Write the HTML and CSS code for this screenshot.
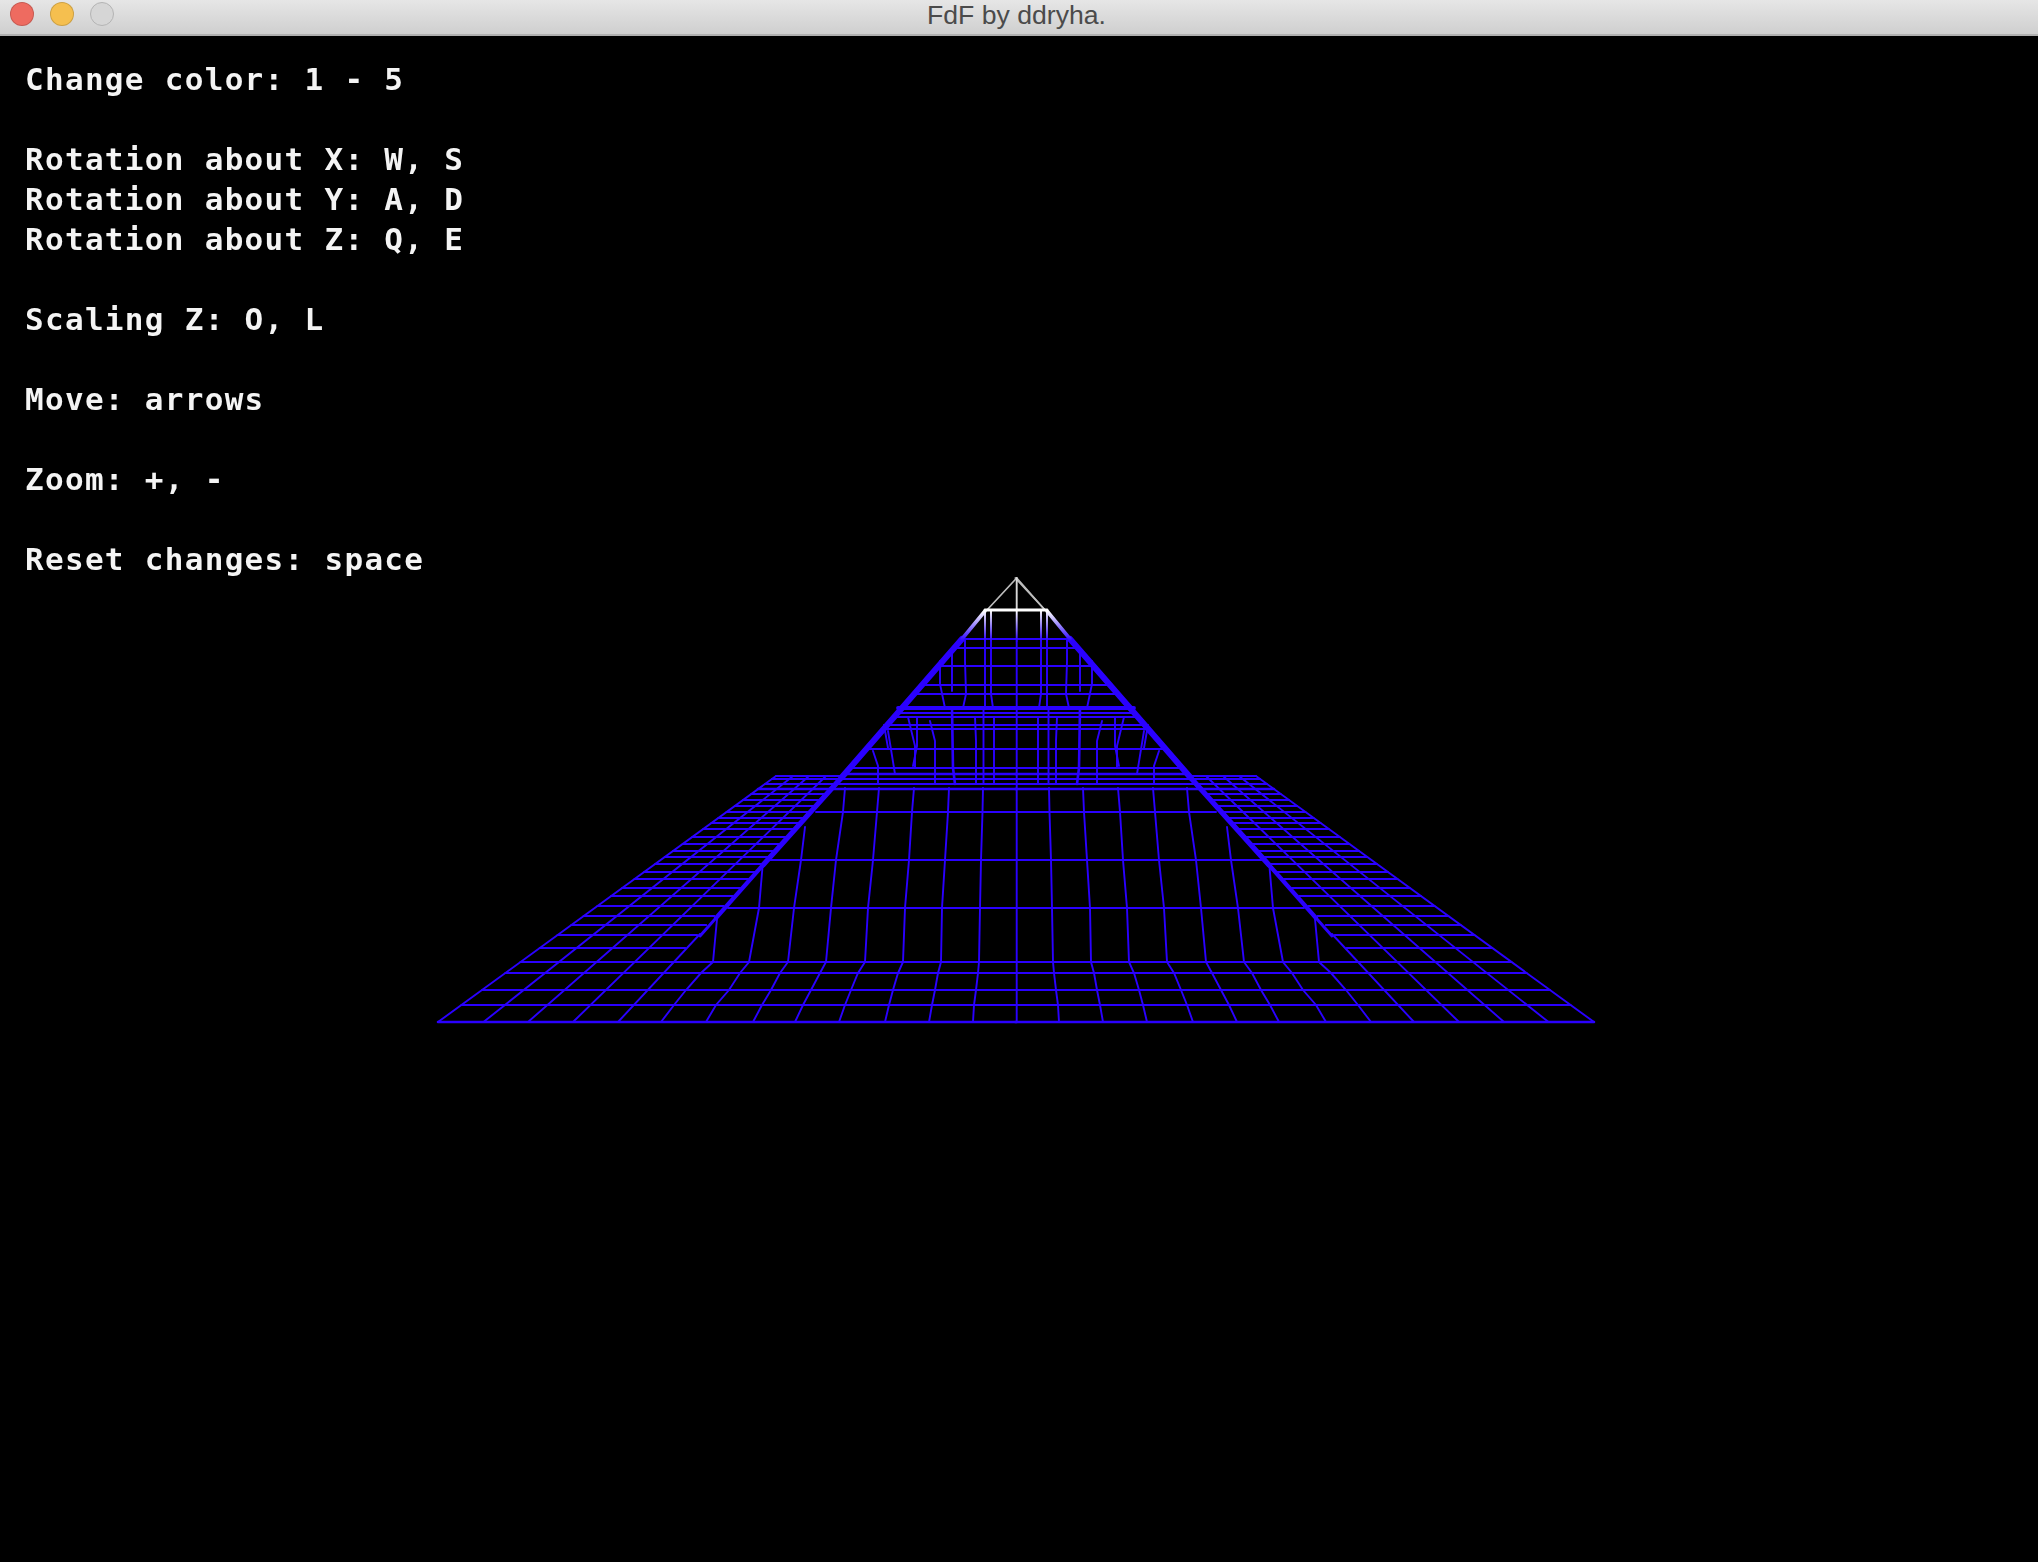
FILE: index.html
```html
<!DOCTYPE html>
<html lang="en">
<head>
<meta charset="utf-8">
<title>FdF by ddryha.</title>
<link rel="stylesheet" href="styles.css">
</head>
<body>
<div class="window">
  <header class="titlebar">
    <div class="lights">
      <span class="light light-close"></span>
      <span class="light light-min"></span>
      <span class="light light-max"></span>
    </div>
    <div class="title">FdF by ddryha.</div>
  </header>
  <main class="viewport">
    <div class="help">
      <p class="line gap">Change color: 1 - 5</p>
      <p class="line">Rotation about X: W, S</p>
      <p class="line">Rotation about Y: A, D</p>
      <p class="line gap">Rotation about Z: Q, E</p>
      <p class="line gap">Scaling Z: O, L</p>
      <p class="line gap">Move: arrows</p>
      <p class="line gap">Zoom: +, -</p>
      <p class="line">Reset changes: space</p>
    </div>
    <svg class="wire" viewBox="0 35 2038 1527" xmlns="http://www.w3.org/2000/svg" aria-hidden="true">
      <defs>
        <linearGradient id="fade" gradientUnits="userSpaceOnUse" x1="0" y1="610" x2="0" y2="640">
          <stop offset="0" stop-color="#ffffff"/>
          <stop offset="1" stop-color="#2a00ff"/>
        </linearGradient>
        <g id="half">
          <!-- wing rows -->
          <path class="thin" d="M539.7 947H685.4M557.5 934H697.2M571.3 924H706.3M583.6 915H714.5M597.4 905H723.6M611.1 895H732.7M622.1 887H740M634.5 878H748.2M644.1 871H754.6M655.1 863H761.9M664.7 856H768.2M673 850H773.7M682.6 843H780.1M692.2 836H786.5M703.2 828H793.7M711.4 822H799.2M718.3 817H803.8M726.5 811H809.2M734.8 805H814.7M743 799H820.2M751.3 793H825.6M776 775H842"/>
          <!-- wing rows that run on into the middle -->
          <path class="thin" d="M765 783H1016.7M771.9 778H1016.7M520.4 961H1016.7M505.3 972H1016.7M482 989H1016.7M461.4 1004H1016.7"/>
          <path class="mid" d="M758 788H1016.7M438 1021H1016.7"/>
          <!-- wing columns -->
          <path class="thin" d="M438 1021L776 775M483.5 1021L793 775M528 1021L809 775M573 1021L826 775M618 1021L700 933"/>
          <!-- floor columns -->
          <path class="thin" d="M661 1021L674 1004L686 989L701 972L713 961L717 918"/>
          <path class="thin" d="M706 1021L716 1004L729 989L740 972L749 961L759 907L762.5 866"/>
          <path class="thin" d="M753 1021L762 1004L771 989L780 972L788 961L794 907L801 859L805 826"/>
          <path class="thin" d="M795 1021L803 1004L811 989L820 972L826 961L831 907L836 859L843 811L845 787"/>
          <path class="thin" d="M839 1021L845 1004L851 989L858 972L865 961L868 907L873 859L877 811L879 787"/>
          <path class="thin" d="M885 1021L889 1004L893 989L898 972L903 961L905 907L909 859L912 811L914 787"/>
          <path class="thin" d="M929 1021L932 1004L935 989L938 972L941 961L942 907L945 859L948 811L949 787"/>
          <path class="thin" d="M973 1021L974 1004L976 989L978 972L979 961L980 907L981 859L982.5 811L983 787"/>
          <!-- floor rows inside the pyramid -->
          <path class="thin" d="M728 907H1016.7M770 859H1016.7M816 811H1016.7"/>
          <!-- pyramid rows -->
          <path class="thin" d="M963 638H1016.7M955 647H1016.7M939 665H1016.7M922 684H1016.7M914 693H1016.7M897 712H1016.7M893 716H1016.7M886 724H1016.7M883 728H1016.7M866 748H1016.7M849 767H1016.7M839 778H1016.7"/>
          <path class="thick" d="M898 707H1016.7"/>
          <path class="mid" d="M843 773H1016.7"/>
          <!-- pyramid columns, top band -->
          <path class="thin" d="M965 638L965 660L966 693L963 707"/>
          <path class="thin" d="M952 650L952 690"/>
          <path class="thin" d="M940 660L940 683L945 707"/>
          <path class="thin" d="M985 640V705"/>
          <path class="thin" d="M991 640V693L993 707"/>
          <!-- pyramid columns, lower band -->
          <path class="thin" d="M994 716V783"/>
          <path class="thin" d="M983.5 707V783"/>
          <path class="thin" d="M975 716L976 740V783"/>
          <path class="mid" d="M952 707L953 767L955 783"/>
          <path class="thin" d="M930 720L935 740V783"/>
          <path class="thin" d="M917 716V745L913 765"/>
          <path class="thin" d="M908 716L915 745V767"/>
          <path class="thin" d="M888 730L895 773"/>
          <path class="thin" d="M873 750L878 765V783"/>
          <path class="thin" d="M884 724L888 747"/>
          <!-- light rim -->
          <path class="edge-xl" d="M962 638L842 776"/>
          <path class="edge-l" d="M842 776L763 864"/>
          <path class="edge-m" d="M763 864L716 917"/>
          <path class="edge-s" d="M716 917L700 935"/>
          <path class="edge-top" d="M985 610L962 638"/>
          <path class="apex" d="M1016.7 577L987 609"/>
        </g>
      </defs>
      <use href="#half"/>
      <use href="#half" transform="matrix(-1 0 0 1 2032 0)"/>
      <path class="apex" d="M1016.7 577L1045 609"/>
      <path class="fade" d="M985 610V640M991 610V640M1016.7 610V640M1041 610V640M1047 610V640"/>
      <path class="thin" d="M1016.7 640V1021"/>
      <path class="apex-mid" d="M1016.7 577V609"/>
      <path class="ridge" d="M985 609H1047"/>
    </svg>
  </main>
</div>
</body>
</html>
```

FILE: styles.css
```css
* { box-sizing: border-box; }
html, body { margin: 0; padding: 0; background: #000; }
.window {
  width: 2038px;
  height: 1562px;
  display: flex;
  flex-direction: column;
  overflow: hidden;
}
.titlebar {
  height: 36px;
  flex: none;
  position: relative;
  display: flex;
  align-items: center;
  justify-content: center;
  background: linear-gradient(#e6e6e6, #cfcfcf);
  border-bottom: 2px solid #b0b0b0;
}
.lights {
  position: absolute;
  left: 10px;
  top: 2px;
  display: flex;
  gap: 16px;
}
.light {
  width: 24px;
  height: 24px;
  border-radius: 50%;
  border: 1px solid rgba(0, 0, 0, 0.16);
}
.light-close { background: #ee6b60; }
.light-min { background: #f5bf4f; }
.light-max { background: #d6d6d6; border-color: #b4b4b4; }
.title {
  font-family: "Liberation Sans", Arial, sans-serif;
  font-size: 26.6px;
  line-height: 30px;
  color: #4b4b4b;
  margin: -4px 5px 0 0;
}
.viewport {
  flex: 1;
  position: relative;
  background: #000;
  padding: 23px 0 0 25px;
}
.help {
  color: #f4f4f4;
  font-family: "DejaVu Sans Mono", "Liberation Mono", monospace;
  font-weight: bold;
  font-size: 31px;
  letter-spacing: 1.3px;
  filter: blur(0.6px);
}
.line {
  margin: 0;
  height: 40px;
  line-height: 40px;
  white-space: pre;
}
.gap { margin-bottom: 40px; }
.wire {
  position: absolute;
  left: 0;
  top: 0;
  width: 2038px;
  height: 1527px;
  fill: none;
  stroke-linecap: round;
}
.thin { stroke: #2a00ff; stroke-width: 1.9; }
.mid { stroke: #2a00ff; stroke-width: 2.6; }
.thick { stroke: #2a00ff; stroke-width: 3.8; }
.edge-xl { stroke: #2a00ff; stroke-width: 6; }
.edge-l { stroke: #2a00ff; stroke-width: 5.2; }
.edge-m { stroke: #2a00ff; stroke-width: 4.2; }
.edge-s { stroke: #2a00ff; stroke-width: 3; }
.edge-top { stroke: url(#fade); stroke-width: 3.6; }
.fade { stroke: url(#fade); stroke-width: 1.9; }
.apex { stroke: #bdbdbd; stroke-width: 1.7; }
.apex-mid { stroke: #d8d8d8; stroke-width: 1.9; }
.ridge { stroke: #ffffff; stroke-width: 2.8; }
```
